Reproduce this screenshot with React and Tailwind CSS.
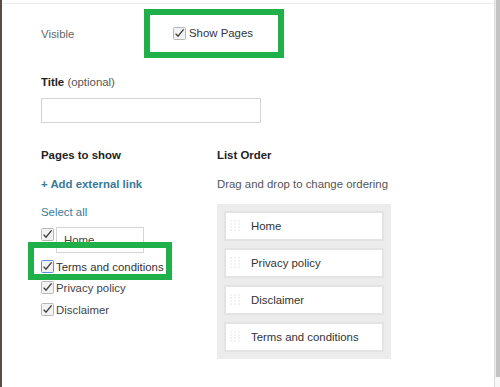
function Check({ focus = false }) {
  return (
    <svg width="13" height="13" viewBox="0 0 13 13" className="shrink-0">
      <rect x="0.5" y="0.5" width="12" height="12" rx="1" fill="#f2f2f2" stroke={focus ? "#5b8fd8" : "#b8b8b8"} />
      <path d="M2.6 6.6 L5 9.2 L10.6 2.4" fill="none" stroke="#404040" strokeWidth="1.4" />
    </svg>
  );
}

function Grip() {
  return (
    <svg width="12" height="12" viewBox="0 0 12 12" className="shrink-0">
      {[1, 4, 7, 10].map(y =>
        [2, 6, 10].map(x => <rect key={x + "-" + y} x={x - 0.5} y={y - 0.5} width="1" height="1" fill="#cfcfcf" />)
      )}
    </svg>
  );
}

const order = ["Home", "Privacy policy", "Disclaimer", "Terms and conditions"];

export default function App() {
  return (
    <div className="w-[500px] h-[387px] bg-white flex overflow-hidden text-[11.4px] font-['Liberation_Sans',Arial,sans-serif] text-[#333]">
      <div className="w-[3px] shrink-0 border-l-2 border-[#5d4b40]" />

      <div className="flex-1 flex flex-col">
        <div className="mt-[3px] h-px bg-[#ececec] mr-[-1px]" />

        <div className="flex items-center mt-[5px] pl-[38px]">
          <div className="w-[103px] text-[#666] pt-[3px]">Visible</div>
          <div className="w-[140px] h-[49px] border-[6px] border-[#20b04a] flex items-center pl-[23px] gap-[3px]">
            <Check />
            <span className="text-[#333]">Show Pages</span>
          </div>
        </div>

        <div className="pl-[38px] mt-[17px] leading-[14px]">
          <span className="font-bold text-[#222]">Title</span> <span className="text-[#555]">(optional)</span>
        </div>
        <div className="ml-[38px] mt-[9px] w-[220px] h-[25px] border border-[#d4d4d4]" />

        <div className="flex pl-[38px] mt-[25px]">
          <div className="w-[176px] flex flex-col leading-[14px]">
            <div className="font-bold text-[#222]">Pages to show</div>
            <div className="mt-[15px] font-bold text-[#3a7a96]">+ Add external link</div>
            <div className="mt-[14px] text-[#3a7a96]">Select all</div>

            <div className="flex items-start mt-[8px] h-[26px]">
              <div className="mt-[1px]"><Check /></div>
              <div className="ml-[2px] w-[88px] h-[26px] border border-[#d4d4d4] pl-[7px] pt-[5px] text-[#444]">Home</div>
            </div>

            <div className="relative flex items-center gap-[2px] h-[21px] mt-[3px]">
              <Check focus />
              <span className="text-[#333]">Terms and conditions</span>
              <div className="absolute left-[-13px] top-[-14px] w-[144px] h-[38px] border-[6px] border-[#20b04a] pointer-events-none" />
            </div>

            <div className="flex items-center gap-[2px] h-[21px]">
              <Check />
              <span className="text-[#444]">Privacy policy</span>
            </div>
            <div className="flex items-center gap-[2px] mt-[1px] h-[21px]">
              <Check />
              <span className="text-[#444]">Disclaimer</span>
            </div>
          </div>

          <div className="flex flex-col leading-[14px]">
            <div className="font-bold text-[#222]">List Order</div>
            <div className="mt-[15px] text-[#555]">Drag and drop to change ordering</div>
            <div className="mt-[13px] w-[174px] bg-[#ececec] p-[7px] flex flex-col gap-[7px]">
              {order.map(name => (
                <div key={name} className="h-[30px] bg-white border-2 border-[#e3e3e3] flex items-center pl-[3px] gap-[10px] text-[#333]">
                  <Grip />
                  <span>{name}</span>
                </div>
              ))}
            </div>
          </div>
        </div>
      </div>

      <div className="w-[6px] shrink-0 bg-[#ebebeb] border-l border-[#dcdcdc] flex flex-col">
        <div className="h-[377px] bg-[#c3c3c3] ml-[1px]" />
        <div className="flex-1 bg-[#f7f7f7]" />
      </div>
    </div>
  );
}
